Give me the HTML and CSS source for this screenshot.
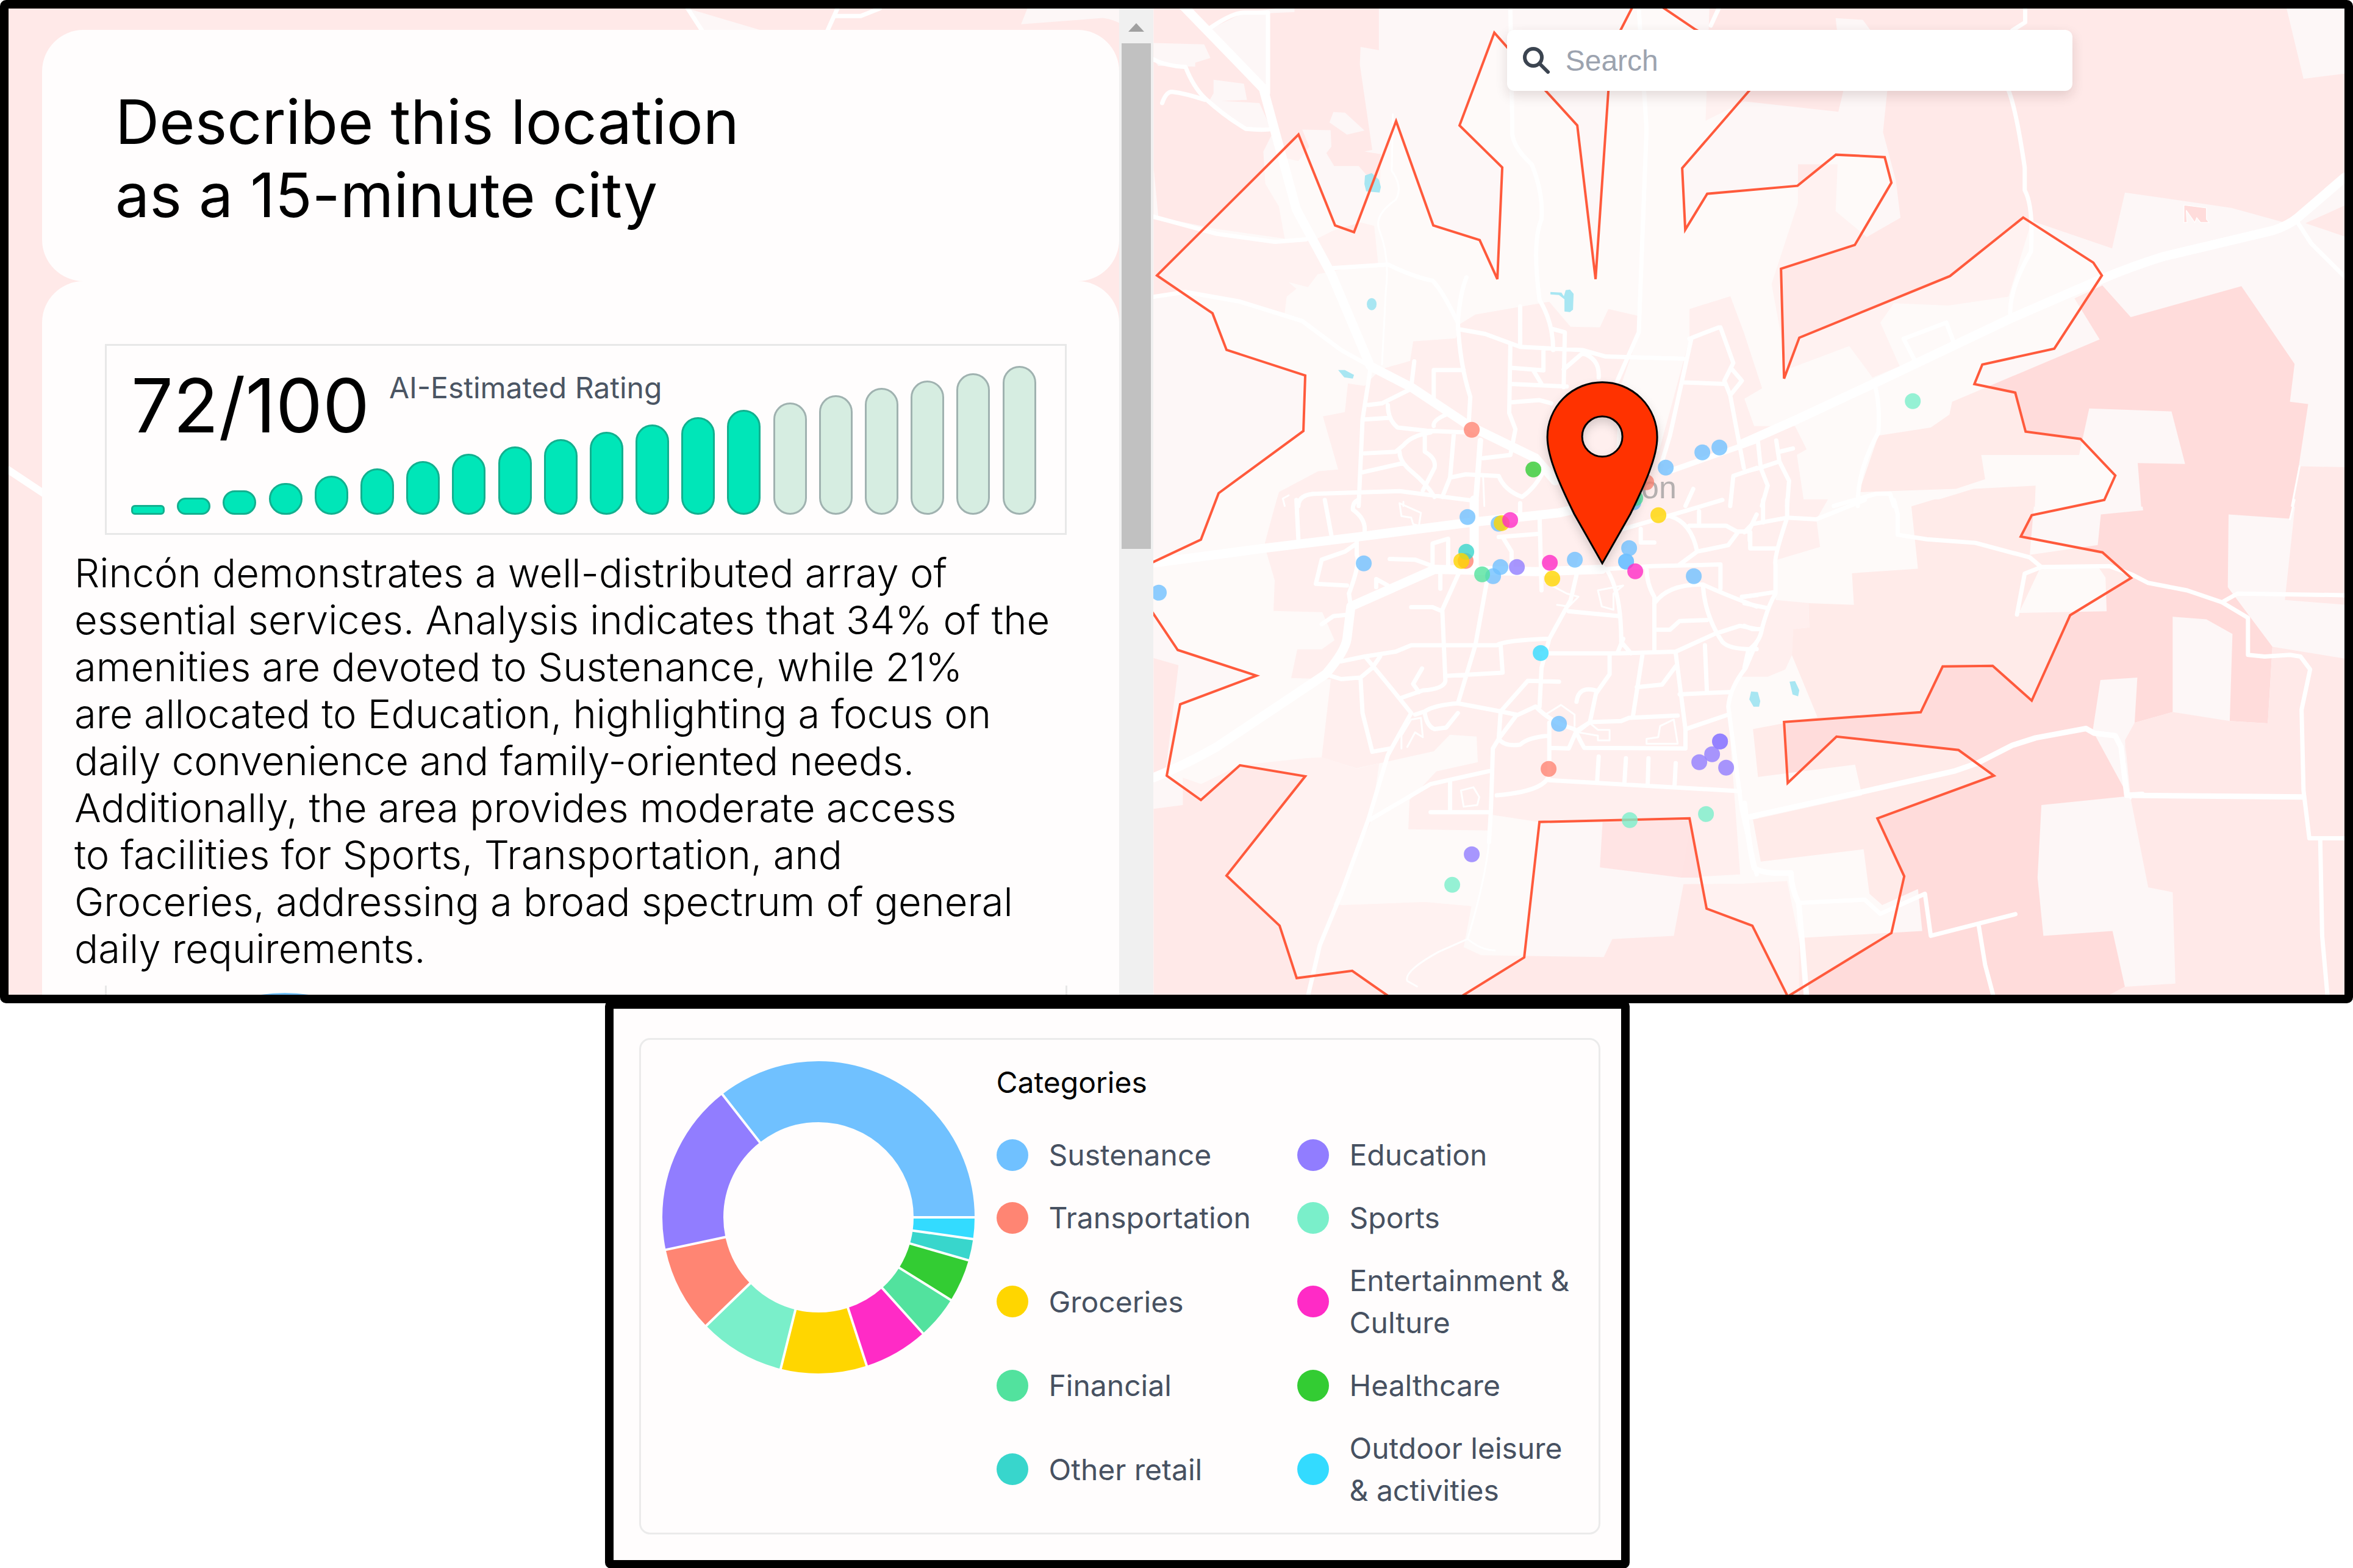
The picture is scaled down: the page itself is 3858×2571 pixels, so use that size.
FILE: index.html
```html
<!DOCTYPE html>
<html lang="en">
<head>
<meta charset="utf-8">
<title>15-minute city</title>
<meta name="viewport" content="width=device-width, initial-scale=1">
<link rel="stylesheet" href="styles.css">
</head>
<body>
<main class="frame explorer">
  <div class="sidebar">
    <svg class="backdrop" viewBox="0 0 1820 1618" preserveAspectRatio="xMinYMin slice" aria-hidden="true">
      <path class="light" d="M1080 0 1215 40H1110ZM1620 0H1770L1806 40V60Q1780 20 1740 15L1610 25ZM1770 60H1820V1000H1800Z"/>
      <path class="road r8" d="M1080 0 1106 40M1300 40 1318 0M1316 12H1355L1385 0"/>
      <path class="road r12" d="M0 734 62 775"/>
    </svg>
    <div class="panel">
      <header class="card title-card">
        <h1>Describe this location<br>as a 15-minute city</h1>
      </header>
      <section class="card report">
        <div class="rating">
          <div class="rating-head">
            <strong class="score">72/100</strong>
            <span class="score-label">AI-Estimated Rating</span>
          </div>
          <div class="bars" aria-hidden="true">
            <i class="bar on" style="height:16px"></i>
            <i class="bar on" style="height:28px"></i>
            <i class="bar on" style="height:40px"></i>
            <i class="bar on" style="height:52px"></i>
            <i class="bar on" style="height:64px"></i>
            <i class="bar on" style="height:76px"></i>
            <i class="bar on" style="height:88px"></i>
            <i class="bar on" style="height:100px"></i>
            <i class="bar on" style="height:112px"></i>
            <i class="bar on" style="height:124px"></i>
            <i class="bar on" style="height:136px"></i>
            <i class="bar on" style="height:148px"></i>
            <i class="bar on" style="height:160px"></i>
            <i class="bar on" style="height:172px"></i>
            <i class="bar" style="height:184px"></i>
            <i class="bar" style="height:196px"></i>
            <i class="bar" style="height:208px"></i>
            <i class="bar" style="height:220px"></i>
            <i class="bar" style="height:232px"></i>
            <i class="bar" style="height:244px"></i>
          </div>
        </div>
        <p class="summary">Rincón demonstrates a well-distributed array of<br>essential services. Analysis indicates that 34% of the<br>amenities are devoted to Sustenance, while 21%<br>are allocated to Education, highlighting a focus on<br>daily convenience and family-oriented needs.<br>Additionally, the area provides moderate access<br>to facilities for Sports, Transportation, and<br>Groceries, addressing a broad spectrum of general<br>daily requirements.</p>
        <div class="next-card">
          <svg viewBox="0 0 512 512" aria-hidden="true"><circle class="sustenance" cx="256" cy="256" r="256"/></svg>
        </div>
      </section>
    </div>
    <div class="scrollbar" aria-hidden="true">
      <svg class="scroll-up" viewBox="0 0 26 14"><path d="M13 0 26 14H0Z"/></svg>
      <div class="scroll-thumb"></div>
    </div>
  </div>

  <div class="map">
    <svg class="map-canvas" viewBox="1891 14 1953 1618" preserveAspectRatio="xMidYMid slice" role="img" aria-label="Map of Rincon with the area reachable in 15 minutes">
      <defs>
        <filter id="pin-shadow" x="-30%" y="-20%" width="160%" height="150%"><feDropShadow dx="0" dy="8" stdDeviation="8" flood-color="#000" flood-opacity=".16"/></filter>
      </defs>

      <!-- fields, north west -->
      <g transform="translate(1880 0) scale(.6378 .5293)">
        <path class="field" d="M18 20H597V156L550 146 548 200 580 465 560 470 602 478 600 590 545 515H482L462 475 475 455 473 404 400 402 418 455 390 500 355 490 325 410 300 470 305 570 340 640 355 740 180 710 18 670Z"/>
        <path class="field" d="M18 680 130 710 330 750 430 745 480 715 550 690 585 700 595 815 440 850 415 890 365 875 385 895 360 920 355 970 240 935 110 905 18 920Z"/>
        <path class="light" d="M18 134 148 138 164 180 125 195V207L30 205 18 185ZM172 248 250 260 258 310 160 315 172 290ZM480 348 510 350 560 405 515 418 470 380ZM165 90 250 40 380 20V38L312 42 316 290 300 260ZM150 310 290 320 320 400 255 402ZM18 520 30 670 18 670Z"/>
      </g>
      <!-- fields, north east -->
      <g transform="translate(2860 0) scale(.6365 .5293)">
        <path class="field" d="M-90 20H1395L1440 245 1550 228V530L1420 690H1390L1255 645 980 597 947 770 740 685 680 920 525 947 385 940 350 1000 400 1135 330 1170 270 1073 110 1145 70 880 138 630V510H240L235 655 315 735 402 675 390 560 357 410 368 280 325 95 305 62 235 57 255 281 242 347 0 315-100 375Z"/>
        <path class="field" d="M1445 692 1550 635V735ZM1430 1445 1550 1448V1570H1412Z"/>
        <path class="dark" d="M922 885 995 983 1280 887 1417 1128 1405 1245 1452 1252 1412 1570H1022L1013 1435 1135 1438 1100 1275 888 1266 862 1410H610L620 1485 545 1515 295 1525 345 1350 480 1325 528 1285 535 1245 915 1052 850 925ZM440 1570 590 1515 750 1505 748 1570Z"/>
        <path class="dark" stroke="#fff" stroke-width="2" d="M1132 636 1190 645V680L1197 690H1175L1165 675 1160 690 1138 652 1140 690H1132Z"/>
      </g>
      <!-- fields, south west -->
      <g transform="translate(1880 820) scale(.6378 .5293)">
        <path class="field" d="M18 957 93 945V860L140 880 240 822 408 800 450 797 540 832 738 778 500 1255 715 1245 835 1258 815 1385 860 1410 1175 1416 1197 1360 1355 1350 1380 1190 1570 1188V1540H18ZM18 490 82 512 50 830 18 845Z"/>
        <path class="light" d="M600 800 738 778 780 728 848 733 852 813 745 840 672 930V1020L885 1025 840 1258 715 1245 480 1255 575 1000Z"/>
        <path class="field2" d="M1172 998 1400 990 1425 1170 1375 1170 1165 1138Z"/>
      </g>
      <!-- fields, south east -->
      <g transform="translate(2860 820) scale(.6365 .5293)">
        <path class="dark" d="M430 20 490-2H747L735 170 910 140 918 45 1027 32 1023-2H1415L1405 58 1247 45 1245 270 1360 455 1348 692 1250 685 1257 415 1190 370 1103 362V657L1005 690 980 745 985 918 765 945 755 1170 770 1350 948 1335 980 1508 930 1540H140V1357L458 1335 447 1205 355 1255 322 1220 307 1082 42 1120 22 990 303 915 285 820 35 858 22 710 188 672 122 480 125 400 167 395 165 320 282 325 277 227 447 213Z"/>
        <path class="field" d="M1103 657 1250 685 1348 692 1360 455 1550 492V1540H930L980 1508 1110 1498 1103 1215 1040 1200 995 925 980 745 1005 690ZM1420-2H1550V325L1392 310ZM0 1188 110 1180 140 1357V1540H0Z"/>
        <path class="light" d="M760 215 910 205 930 240 933 345 707 350ZM917 558 1012 550 1005 690 980 745 985 910 897 715Z"/>
      </g>
      <!-- built-up area -->
      <path class="town" d="M2393 532 2419 516 2540 495 2575 536 2623 537 2637 507 2685 518V553L2655 640 2650 740H2720L2770 556V507L2837 486 2860 548 2889 637 2860 654 2876 699H2943L2962 737 2946 746 2957 819H2997L2978 852 2984 897 2914 918 2911 984 2965 989 2966 1029 2940 1032 2938 1074 2927 1098 2898 1110H2853L2833 1159 2853 1434 2757 1439 2773 1344 2523 1348 2444 1336 2441 1362 2309 1360 2311 1312 2355 1265 2423 1250 2421 1208 2377 1205 2351 1232 2224 1260 2167 1242 2182 1114 2117 1112 2127 1065H2167L2188 1050 2168 1004 2088 1002 2090 952 2073 894 2090 831 2097 807 2161 773 2194 770 2169 683 2205 676 2210 629 2237 633 2263 606 2312 592 2317 560 2387 555Z"/>

      <path class="reach-fill" d="M1897 452 2129 221 2189 370 2220 381 2289 199 2350 370 2426 394 2455 458 2463 275 2393 206 2450 54 2534 149 2586 206 2616 458 2637 149 2642 79 2680 5 2715 5 2780 49 2900 112 2758 276 2763 377 2799 318 2947 305 3010 254 3090 258 3101 300 3041 402 2920 441 2925 621 2950 554 3197 453 3317 357 3432 431 3446 452 3368 572 3250 598 3237 630 3304 644 3321 708 3411 720 3468 780 3450 820 3331 845 3313 880 3447 906 3494 948 3394 1009 3331 1149 3267 1092 3185 1093 3149 1168 2925 1184 2931 1284 3011 1208 3211 1230 3269 1272 3078 1342 3122 1437 3101 1530 2931 1634 2873 1518 2798 1490 2770 1342 2524 1348 2499 1570 2370 1650 2300 1650 2217 1592 2126 1604 2098 1518 2011 1436 2140 1273 2033 1255 1969 1312 1913 1272 1935 1155 2060 1108 1931 1066 1880 990 1880 927 1969 885 1998 809 2137 707 2140 616 2011 574 1988 514Z"/>

      <!-- roads, north west -->
      <g class="road" transform="translate(1880 0) scale(.6378 .5293)">
        <path class="r14" d="M95 20 300 275Q315 340 385 650L475 850 575 1135 680 1200 830 1320 1000 1420 1050 1490"/>
        <path class="r9" d="M858 1365 845 1570M1345 1460 1568 1365"/>
        <path class="r6" d="M160 90Q220 40 250 40H312L312 290M18 185Q50 205 100 208 120 270 150 305 200 360 255 400 300 405 325 400M40 320Q50 285 65 285 100 290 150 310M18 672 180 725 330 750 410 742M18 920 100 905 240 935 400 995 500 1085 575 1135M470 832 620 820Q690 860 735 870 760 900 800 1000 805 1130 832 1230L828 1310M822 860Q805 910 800 1000M935 26 940 400Q935 450 990 510 1020 600 1015 680 990 750 1010 930 1045 1000 1045 1085M1265 26 1285 400 1265 1030 1210 1180M800 1020 870 1035 960 1075 1120 1085 1180 1105 1380 1112M960 950V1075M935 1065 932 1280 948 1330 935 1410 865 1420M1045 1020 1075 1030 1072 1200M935 1140 1020 1148V1085M995 1150 1015 1190M935 1190 1080 1198M935 1247 1010 1240 1040 1250M1072 1145 1120 1095Q1165 1110 1162 1170M738 1320Q735 1300 780 1280M738 1240V1147H815M680 1200 688 1120M575 1145 555 1300 545 1568M570 1255 605 1250 680 1205M620 1255Q620 1300 645 1325L720 1335 820 1340M560 1300 620 1295M560 1405 640 1400 660 1380Q680 1350 730 1340M650 1400Q650 1430 680 1460 720 1500 740 1540M550 1465 660 1435M790 1340 780 1480 760 1540M715 1340V1400Q745 1420 740 1450L710 1520M780 1480 820 1470 905 1475Q920 1520 965 1540 1000 1510 1020 1460M390 1568Q390 1530 440 1530L650 1522 830 1550M1395 1050 1470 1015M1400 1050 1345 1350 1325 1430M1380 1185 1485 1190M1475 1015 1508 1125 1485 1180 1500 1225 1530 1180 1505 1145M1500 1225 1535 1450M1470 28 1450 80M1385 1568 1405 1515M1500 1568 1508 1475 1568 1450"/>
        <path class="r4" d="M633 355 630 530Q660 580 640 620 580 670 600 720 625 800 615 900L605 1130M865 1480 868 1568M660 1568V1555M355 1568 350 1545 365 1535"/>
      </g>
      <!-- roads, north east -->
      <g class="road" transform="translate(2860 0) scale(.6365 .5293)">
        <path class="r14" d="M-5 1375 135 1300 340 1185 690 985 920 865Q1000 825 1080 795L1360 715Q1400 700 1425 675L1546 550"/>
        <path class="r7" d="M723 20V70L690 95M680 280Q700 340 722 520V590Q745 640 738 780 680 900 685 980M1425 690 1460 755 1546 858M335 1190Q350 1250 345 1340 290 1460 292 1568M410 1050 520 1000 542 1070M410 1050 440 1120M35 1370 42 1450 60 1505 45 1568M0 1462 40 1450 90 1430 115 1490 110 1568M82 1365 90 1430M90 1400 125 1390M230 1568 340 1530H375L385 1568"/>
        <path class="r4" d="M1430 1445 1410 1568"/>
      </g>
      <!-- roads, south west -->
      <g class="road" transform="translate(1880 820) scale(.6378 .5293)">
        <path class="r14" d="M18 195 300 150 540 115 700 90 830 70 1060 40 1170 10M18 860Q100 820 180 765L460 540Q510 470 515 430L525 330 740 215 1000 222 1170 215M842 0V210"/>
        <path class="r8" d="M1170 215 1300 205 1475 200V275M805 220 760 340 768 560Q765 585 710 590L650 615M875 250 845 450 800 630M540 130V170Q550 195 520 290L525 330M540 135 510 160 450 185 435 260 515 265M390 120 385 0M458 0 475 110M560 100Q565 60 530 30 530 5 545 0M500 500 560 485 640 470 680 450 900 450Q920 435 1035 430L1090 310 1115 180M1035 430 1015 520 1010 640M1015 475 1215 475 1360 470 1460 415 1525 390 1568 400M460 540 500 555 550 550 580 520 600 485M565 490 640 600 680 660M708 522 685 570 700 595M550 555 555 660 580 780 625 770M680 660 620 790 570 990 500 1220 445 1380 415 1535M690 665 715 655Q740 635 800 630L910 655 950 665M715 660Q720 700 740 710L770 705 800 660M770 545 915 535 910 450M910 655 905 740 890 770 885 960 880 1060M910 655 980 560 1060 563M950 668 905 740Q920 765 960 758 980 735 1035 730M950 668 1000 640Q1040 690 1100 710 1120 760 1125 768L1385 770V710L1360 475M1035 690V840Q1040 900 900 915M1035 768 1085 770 1105 715 1140 688 1220 685 1240 675 1365 668M1140 685 1155 600 1190 540V480M1105 625Q1110 575 1155 590M1250 670 1275 475M1260 580 1325 572 1360 515M1370 602 1500 595M1385 710 1495 665M1440 590 1435 450M1035 868 1525 902M1158 870 1162 795M1228 880 1232 800M1288 880 1290 800M1357 885 1360 815M730 967H880M780 965V875M575 990 730 880 880 840M755 275V215M625 183 690 185 735 205M735 200V135L775 120V200M590 270V245L620 265M680 332H735L760 345M450 385 480 360 520 355M1085 345 1215 360M1185 220Q1220 290 1220 440L1245 475M1210 475 1225 430M1285 210Q1285 260 1305 300V465M1305 320Q1340 260 1430 262 1480 290 1568 330M1430 265Q1435 360 1480 440 1500 465 1568 462M1530 300 1568 295M1310 402H1345L1370 375 1440 372M1225 90 1340 50 1480 0M1270 90V132H1305M1345 50Q1400 70 1415 160M1370 200 1415 160 1495 140 1520 100 1490 80H1395M1420 75V35M1520 98H1550V125M1550 90 1568 45M905 115 1010 105M915 115 938 160V210M1010 50 1015 280M960 40V10M1568 440 1540 520Q1500 580 1495 640L1530 960 1568 1160M1545 985 1568 980"/>
        <path class="r4" d="M880 1060Q870 1180 825 1360L750 1400Q660 1460 670 1490L695 1507M825 1360Q860 1395 895 1395M650 10 705 40 700 80 685 75 680 55 655 50ZM808 900 840 890 855 920 850 945 815 950ZM1025 665 1065 635 1100 665 1100 700M1110 720 1140 692 1160 712H1190V745H1160V730ZM1285 740 1315 735 1320 700 1355 680 1365 755H1285ZM655 770V730L680 680 705 675 710 735 690 720 670 765M1160 280 1225 265 1200 290V340L1170 330ZM1025 255 1080 290 1110 300 1085 330 1055 325"/>
      </g>
      <!-- roads, south east -->
      <g class="road" transform="translate(2860 820) scale(.6365 .5293)">
        <path class="r9" d="M0 985 300 905 540 840 600 815 690 760 750 737 880 708 900 722 955 730 970 765 985 915 1440 920M985 915 1025 912M0 940Q10 1060 25 1140 50 1160 120 1155 120 1200 140 1250 150 1380 160 1540"/>
        <path class="r8" d="M385 0 395 45V108L470 122 595 133 735 178 765 208 940 205 1000 232 1040 257 1140 280 1230 317 1297 365V480L1340 485 1405 480 1432 485 1457 525 1435 650 1440 900 1455 1048H1546M1230 317 1270 290 1546 295M765 208 722 228 702 355M1483 1050 1488 1350 1502 1540M140 1248 310 1238 350 1282 465 1220 480 1350 698 1283M603 1315 620 1440 642 1540M48 0V70M0 100 20 75 110 55 185 60 310 0M110 0V55Q75 180 80 200V290Q60 330 45 400 40 440 10 465L0 520M15 100V150H80M0 300 80 285M0 320 60 335M0 390 20 400H45"/>
        <path class="r4" d="M1417 0 1405 60M985 910 995 925"/>
      </g>

      <!-- water -->
      <path class="water" d="M2238 288 2249 284 2261 295 2264 307 2262 316 2240 314 2237 302ZM2542 479 2560 480 2564 486 2567 476 2574 475 2580 482 2579 508 2574 512 2565 511 2565 491 2556 484 2542 483ZM2194 607 2205 607 2220 615 2218 621 2204 619ZM2871 1134 2882 1135 2886 1150 2884 1159 2875 1159 2868 1147ZM2934 1118 2943 1117 2950 1132 2948 1142 2939 1139Z"/>
      <ellipse class="water" cx="2249" cy="499" rx="8" ry="10"/>

      <path class="reach-line" d="M1897 452 2129 221 2189 370 2220 381 2289 199 2350 370 2426 394 2455 458 2463 275 2393 206 2450 54 2534 149 2586 206 2616 458 2637 149 2642 79 2680 5 2715 5 2780 49 2900 112 2758 276 2763 377 2799 318 2947 305 3010 254 3090 258 3101 300 3041 402 2920 441 2925 621 2950 554 3197 453 3317 357 3432 431 3446 452 3368 572 3250 598 3237 630 3304 644 3321 708 3411 720 3468 780 3450 820 3331 845 3313 880 3447 906 3494 948 3394 1009 3331 1149 3267 1092 3185 1093 3149 1168 2925 1184 2931 1284 3011 1208 3211 1230 3269 1272 3078 1342 3122 1437 3101 1530 2931 1634 2873 1518 2798 1490 2770 1342 2524 1348 2499 1570 2370 1650 2300 1650 2217 1592 2126 1604 2098 1518 2011 1436 2140 1273 2033 1255 1969 1312 1913 1272 1935 1155 2060 1108 1931 1066 1880 990 1880 927 1969 885 1998 809 2137 707 2140 616 2011 574 1988 514Z"/>

      <text class="place" x="2691" y="817">on</text>

      <g class="places">
        <g class="sustenance">
          <circle cx="2731" cy="767" r="13"/><circle cx="2791" cy="742" r="13"/><circle cx="2819" cy="734" r="13"/><circle cx="2678" cy="824" r="13"/><circle cx="2406" cy="848" r="13"/><circle cx="2457" cy="859" r="13"/><circle cx="2236" cy="924" r="13"/><circle cx="1900" cy="972" r="13"/><circle cx="2448" cy="945" r="13"/><circle cx="2460" cy="930" r="13"/><circle cx="2582" cy="918" r="13"/><circle cx="2671" cy="899" r="13"/><circle cx="2666" cy="921" r="13"/><circle cx="2666" cy="921" r="13"/><circle cx="2777" cy="945" r="13"/><circle cx="2556" cy="1187" r="13"/>
        </g>
        <g class="education">
          <circle cx="2487" cy="930" r="13"/><circle cx="2820" cy="1216" r="13"/><circle cx="2820" cy="1216" r="13"/><circle cx="2807" cy="1237" r="13"/><circle cx="2786" cy="1250" r="13"/><circle cx="2830" cy="1259" r="13"/><circle cx="2413" cy="1401" r="13"/>
        </g>
        <g class="transportation">
          <circle cx="2413" cy="705" r="13"/><circle cx="2699" cy="791" r="13"/><circle cx="2403" cy="920" r="13"/><circle cx="2539" cy="1261" r="13"/>
        </g>
        <g class="sports">
          <circle cx="3136" cy="658" r="13"/><circle cx="2672" cy="1345" r="13"/><circle cx="2797" cy="1335" r="13"/><circle cx="2381" cy="1451" r="13"/>
        </g>
        <circle class="retail" cx="2404" cy="905" r="13"/>
        <g class="groceries">
          <circle cx="2462" cy="858" r="13"/><circle cx="2396" cy="920" r="13"/><circle cx="2545" cy="949" r="13"/><circle cx="2719" cy="845" r="13"/>
        </g>
        <g class="culture">
          <circle cx="2476" cy="853" r="13"/><circle cx="2541" cy="923" r="13"/><circle cx="2681" cy="937" r="13"/>
        </g>
        <g class="financial"><circle cx="2430" cy="942" r="13"/><circle cx="2681" cy="817" r="13"/></g>
        <circle class="healthcare" cx="2514" cy="770" r="13"/>
        <circle class="leisure" cx="2526" cy="1071" r="13"/>
      </g>

      <path class="pin" filter="url(#pin-shadow)" fill-rule="evenodd" d="M2537 717A90 90 0 0 1 2717 717C2717 750 2696 796 2673 843L2627 924 2581 843C2558 796 2537 750 2537 717ZM2594 716A33 33 0 1 0 2660 716 33 33 0 1 0 2594 716Z"/>
    </svg>
    <label class="search">
      <svg class="search-icon" viewBox="0 0 44 44" aria-hidden="true"><circle cx="17" cy="17" r="14"/><path d="M27 27 41 41"/></svg>
      <input type="text" placeholder="Search" aria-label="Search">
    </label>
  </div>
</main>

<section class="frame breakdown">
  <div class="breakdown-card">
    <svg class="donut" viewBox="-256 -256 512 512" role="img" aria-label="Share of amenities by category">
      <g class="slices" transform="scale(1 -1)">
        <circle r="206" pathLength="45" stroke="#70c1ff" stroke-dasharray="16 29"/>
        <circle r="206" pathLength="45" stroke="#917dff" stroke-dasharray="8 37" stroke-dashoffset="-16"/>
        <circle r="206" pathLength="45" stroke="#ff8573" stroke-dasharray="4 41" stroke-dashoffset="-24"/>
        <circle r="206" pathLength="45" stroke="#7aefca" stroke-dasharray="4 41" stroke-dashoffset="-28"/>
        <circle r="206" pathLength="45" stroke="#ffd600" stroke-dasharray="4 41" stroke-dashoffset="-32"/>
        <circle r="206" pathLength="45" stroke="#ff2bc6" stroke-dasharray="3 42" stroke-dashoffset="-36"/>
        <circle r="206" pathLength="45" stroke="#52e29e" stroke-dasharray="2 43" stroke-dashoffset="-39"/>
        <circle r="206" pathLength="45" stroke="#33cc33" stroke-dasharray="2 43" stroke-dashoffset="-41"/>
        <circle r="206" pathLength="45" stroke="#38d6cc" stroke-dasharray="1 44" stroke-dashoffset="-43"/>
        <circle r="206" pathLength="45" stroke="#33dbff" stroke-dasharray="1 44" stroke-dashoffset="-44"/>
      </g>
      <g class="dividers">
        <path d="M154 0H258"/>
        <path d="M154 0H258" transform="rotate(-128)"/>
        <path d="M154 0H258" transform="rotate(-192)"/>
        <path d="M154 0H258" transform="rotate(-224)"/>
        <path d="M154 0H258" transform="rotate(-256)"/>
        <path d="M154 0H258" transform="rotate(-288)"/>
        <path d="M154 0H258" transform="rotate(-312)"/>
        <path d="M154 0H258" transform="rotate(-328)"/>
        <path d="M154 0H258" transform="rotate(-344)"/>
        <path d="M154 0H258" transform="rotate(-352)"/>
      </g>
    </svg>
    <div class="legend">
      <h2>Categories</h2>
      <ul>
        <li><i class="dot sustenance"></i><span>Sustenance</span></li>
        <li><i class="dot education"></i><span>Education</span></li>
        <li><i class="dot transportation"></i><span>Transportation</span></li>
        <li><i class="dot sports"></i><span>Sports</span></li>
        <li><i class="dot groceries"></i><span>Groceries</span></li>
        <li><i class="dot culture"></i><span>Entertainment &amp; Culture</span></li>
        <li><i class="dot financial"></i><span>Financial</span></li>
        <li><i class="dot healthcare"></i><span>Healthcare</span></li>
        <li><i class="dot retail"></i><span>Other retail</span></li>
        <li><i class="dot leisure"></i><span>Outdoor leisure &amp; activities</span></li>
      </ul>
    </div>
  </div>
</section>
</body>
</html>
```
FILE: styles.css
```css
* { box-sizing: border-box; }

body {
  margin: 0;
  background: #fff;
  color: #000;
  font-family: Inter, "Liberation Sans", sans-serif;
}

h1, h2, p, ul { margin: 0; padding: 0; }

.frame {
  border: 14px solid #000;
  border-radius: 10px;
}

/* Explorer: report on the left, map on the right */
.explorer {
  display: flex;
  height: 64vh;
  overflow: hidden;
}

.sidebar {
  position: relative;
  display: flex;
  flex: 0 0 49%;
  background: #ffe9e8;
}

.backdrop {
  position: absolute;
  top: 0;
  left: 0;
  width: 100%;
  height: 100%;
}

.panel {
  position: relative;
  flex: 1;
  padding: 35px 0 0 55px;
  overflow: hidden;
}

.card {
  background: #fffdfd;
  border-radius: 68px;
}

.title-card { padding: 91px 80px 81px 120px; }

h1 {
  font-size: 100px;
  font-weight: 400;
  line-height: 120px;
}

.report { padding: 103px 0 0; }

.rating {
  display: grid;
  margin: 0 86px 0 103px;
  padding: 33px 47px 30px 40px;
  border: 3px solid #e8e8e8;
}

.rating-head, .bars { grid-area: 1 / 1; }

.rating-head {
  display: flex;
  align-items: flex-start;
  gap: 32px;
  padding-top: 6px;
}

.score {
  font-size: 122px;
  font-weight: 400;
  line-height: 117px;
}

.score-label {
  padding-top: 6px;
  color: #4b5563;
  font-size: 48px;
  line-height: 48px;
}

.bars {
  display: flex;
  align-items: flex-end;
  justify-content: space-between;
}

.bar {
  width: 55px;
  background: #d6ede1;
  border: 3px solid #a0b2b0;
  border-radius: 28px;
}

.bar.on {
  background: #00e6b8;
  border-color: #12b08f;
}

.bar:first-child { border-radius: 6px; }
.bar:nth-child(2) { border-radius: 14px; }

.summary {
  margin-top: 24px;
  padding-left: 53px;
  font-family: "Century Gothic", Inter, sans-serif;
  font-size: 65px;
  font-weight: 300;
  line-height: 77px;
  white-space: nowrap;
}

.next-card {
  margin: 22px 85px 0 103px;
  padding: 12px 36px;
  border: solid #e8e8e8;
  border-width: 0 3px;
}

.next-card svg { display: block; width: 512px; }

.scrollbar {
  position: relative;
  flex: 0 0 56px;
  padding: 24px 4px 0;
  background: #f0f0f0;
}

.scroll-up {
  display: block;
  width: 26px;
  height: 14px;
  margin: 0 auto 19px;
  fill: #a0a0a0;
}

.scroll-thumb {
  height: 52%;
  background: #c1c1c1;
}

/* Map */
.map {
  position: relative;
  flex: 1;
  min-width: 0;
  background: #fdf7f7;
}

.map-canvas { display: block; width: 100%; height: 100%; }

.field { fill: #ffe9e8; }
.field2 { fill: #ffe4e4; }
.dark { fill: #ffdcdb; }
.light { fill: #fdf7f7; }
.town { fill: #ffe3e3; }
.water { fill: #a8e6f2; }

.road {
  fill: none;
  stroke: #fff;
  stroke-linecap: round;
  stroke-linejoin: round;
}

.road path, path.road { vector-effect: non-scaling-stroke; }
.r4 { stroke-width: 3px; }
.r6 { stroke-width: 7px; }
.r7 { stroke-width: 7px; }
.r8 { stroke-width: 7px; }
.r9 { stroke-width: 9px; }
.r12 { stroke-width: 12px; }
.r14 { stroke-width: 15px; }

.reach-fill { fill: #fffefc; fill-opacity: .42; }

.reach-line {
  fill: none;
  stroke: #ff5a3c;
  stroke-width: 4px;
}

.place {
  fill: #b5b0b0;
  font-family: "Liberation Sans", sans-serif;
  font-size: 52px;
}

.places { fill-opacity: .8; }

.sustenance { fill: #70c1ff; background: #70c1ff; }
.education { fill: #917dff; background: #917dff; }
.transportation { fill: #ff8573; background: #ff8573; }
.sports { fill: #7aefca; background: #7aefca; }
.groceries { fill: #ffd600; background: #ffd600; }
.culture { fill: #ff2bc6; background: #ff2bc6; }
.financial { fill: #52e29e; background: #52e29e; }
.healthcare { fill: #33cc33; background: #33cc33; }
.retail { fill: #38d6cc; background: #38d6cc; }
.leisure { fill: #33dbff; background: #33dbff; }

.pin {
  fill: #ff3300;
  stroke: #000;
  stroke-width: 3px;
}

.search {
  position: absolute;
  top: 35px;
  left: 30%;
  display: flex;
  align-items: center;
  gap: 26px;
  width: 47.5%;
  height: 100px;
  margin-left: -6px;
  padding: 0 26px;
  background: #fff;
  border-radius: 12px;
  box-shadow: 0 8px 20px rgba(60, 20, 20, .14);
}

.search-icon {
  flex: none;
  width: 44px;
  fill: none;
  stroke: #3b4450;
  stroke-width: 6px;
  stroke-linecap: round;
}

.search input {
  flex: 1;
  min-width: 0;
  padding: 0;
  border: 0;
  outline: 0;
  background: none;
  color: #374151;
  font-family: "Liberation Sans", sans-serif;
  font-size: 48px;
}

.search input::placeholder { color: #9ca3af; opacity: 1; }

/* Category breakdown */
.breakdown {
  width: 44%;
  max-width: 1680px;
  margin: -5px 0 0 25.7%;
  padding: 48px 34px 42px 42px;
  background: #fffdfd;
}

.breakdown-card {
  display: flex;
  align-items: flex-start;
  gap: 36px;
  padding: 35px;
  border: 3px solid #ebebeb;
  border-radius: 18px;
}

.donut { flex: none; width: 512px; height: 512px; }
.slices { fill: none; stroke-width: 100px; }
.dividers { stroke: #fff; stroke-width: 4px; }

.legend { flex: 1; }

h2 {
  margin-bottom: 50px;
  font-size: 48px;
  font-weight: 400;
  line-height: 69px;
}

.legend ul {
  display: grid;
  grid-template-columns: 1fr 1fr;
  gap: 34px;
  list-style: none;
}

.legend li {
  display: flex;
  align-items: center;
  gap: 34px;
  color: #475161;
  font-size: 48px;
  line-height: 69px;
}

.dot {
  flex: none;
  width: 52px;
  height: 52px;
  border-radius: 50%;
}
```
